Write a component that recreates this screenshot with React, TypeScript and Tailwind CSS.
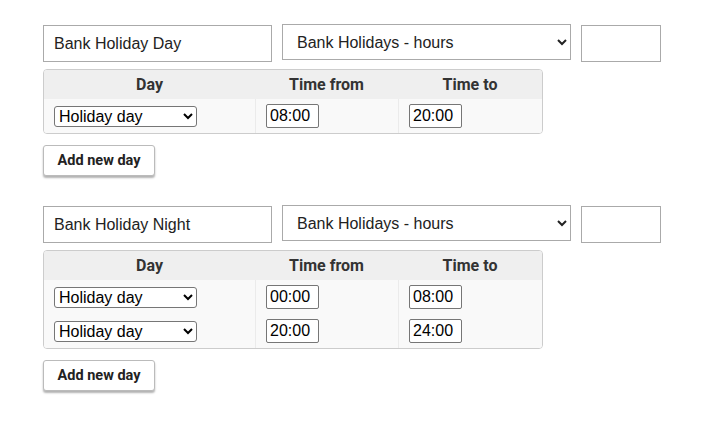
import React from "react";

type Row = { day: string; from: string; to: string };

const blocks: { name: string; rows: Row[] }[] = [
  { name: "Bank Holiday Day", rows: [{ day: "Holiday day", from: "08:00", to: "20:00" }] },
  {
    name: "Bank Holiday Night",
    rows: [
      { day: "Holiday day", from: "00:00", to: "08:00" },
      { day: "Holiday day", from: "20:00", to: "24:00" },
    ],
  },
];

function DayTable({ rows }: { rows: Row[] }) {
  return (
    <div className="mt-[7px] w-[500px] overflow-hidden rounded-[4px] border border-[#cccccc]">
      {/* Header */}
      <div className="grid h-[29px] grid-cols-[211px_143px_1fr] items-center bg-[#efefef] font-['Roboto',sans-serif] text-[16px] font-bold text-[#333]">
        <div className="text-center">Day</div>
        <div className="text-center">Time from</div>
        <div className="text-center">Time to</div>
      </div>

      {rows.map((r, i) => (
        <div key={i} className="grid h-[34px] grid-cols-[211px_143px_1fr] bg-[#f9f9f9]">
          <div className="flex items-center pl-[10px]">
            <select
              defaultValue={r.day}
              className="h-[21px] w-[143px] rounded-[3px] border border-[#767676] bg-white text-[16px] text-black"
            >
              <option>Holiday day</option>
              <option>Working day</option>
            </select>
          </div>
          <div className="flex items-center border-l border-[#ebebeb] pl-[10px]">
            <input
              defaultValue={r.from}
              className="h-[24px] w-[53px] rounded-[2px] border border-[#767676] bg-white px-[3px] text-[16px] text-black"
            />
          </div>
          <div className="flex items-center border-l border-[#ebebeb] pl-[10px]">
            <input
              defaultValue={r.to}
              className="h-[24px] w-[53px] rounded-[2px] border border-[#767676] bg-white px-[3px] text-[16px] text-black"
            />
          </div>
        </div>
      ))}
    </div>
  );
}

export default function App() {
  return (
    <div className="min-h-screen bg-white px-[43px] pt-[24px] font-['Liberation_Sans',Arial,sans-serif] text-[#222]">
      {blocks.map((b, i) => (
        <div key={i} className="mb-[29px] flex flex-col items-start">
          <div className="flex items-start gap-[10px]">
            <input
              defaultValue={b.name}
              className="mt-px h-[37px] w-[229px] border border-[#aaaaaa] bg-white px-[10px] text-[16px]"
            />
            <select
              defaultValue="hours"
              className="h-[36px] w-[289px] border border-[#aaaaaa] bg-white pl-[10px] pr-[4px] text-[16px]"
            >
              <option value="hours">Bank Holidays - hours</option>
            </select>
            <input className="mt-px h-[37px] w-[80px] border border-[#aaaaaa] bg-white" />
          </div>

          <DayTable rows={b.rows} />

          <button className="mt-[11px] h-[31px] w-[112px] rounded-[3px] border border-[#bbbbbb] bg-white font-['Roboto',sans-serif] text-[14.5px] font-bold text-[#222] shadow-[0_2px_2px_rgba(0,0,0,0.3)]">
            Add new day
          </button>
        </div>
      ))}
    </div>
  );
}
